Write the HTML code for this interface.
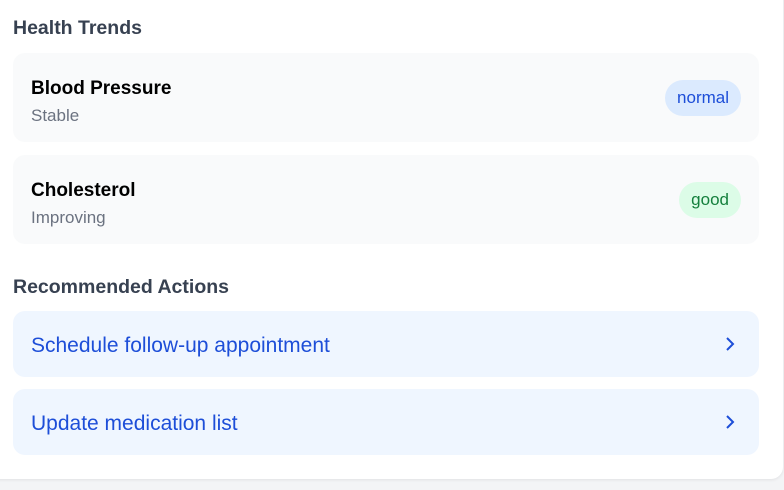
<!DOCTYPE html>
<html><head><meta charset="utf-8"><style>
*{box-sizing:border-box;margin:0;padding:0}
body{width:784px;height:490px;background:#f3f4f6;font-family:"Liberation Sans",sans-serif;position:relative;overflow:hidden}
.card{position:absolute;left:-20px;top:-20px;width:803px;height:499px;background:#fff;border-radius:12px;box-shadow:0 1px 3px rgba(0,0,0,0.08)}
.h{position:absolute;left:13px;font-size:19.5px;font-weight:bold;color:#374151}
.item{position:absolute;left:13px;width:746px;height:89px;background:#f9fafb;border-radius:12px}
.t{position:absolute;left:18px;top:25px;font-size:19px;font-weight:bold;color:#000}
.s{position:absolute;left:18px;top:53px;font-size:17px;color:#6b7280}
.b{position:absolute;right:18px;top:27px;height:36px;line-height:36px;border-radius:18px;font-size:17px;padding:0 12px}
.act{position:absolute;left:13px;width:746px;height:66px;background:#eff6ff;border-radius:12px;color:#1d4ed8;font-size:21px;line-height:70px;padding-left:18px}
.act svg{position:absolute;right:24px;top:25px}
</style></head><body>
<div class="card"></div>
<div class="h" style="top:17px">Health Trends</div>
<div class="item" style="top:53px"><div class="t">Blood Pressure</div><div class="s">Stable</div><div class="b" style="background:#dbeafe;color:#1d4ed8">normal</div></div>
<div class="item" style="top:155px"><div class="t">Cholesterol</div><div class="s">Improving</div><div class="b" style="background:#dcfce7;color:#15803d">good</div></div>
<div class="h" style="top:276px">Recommended Actions</div>
<div class="act" style="top:311px">Schedule follow-up appointment<svg width="10" height="16" viewBox="0 0 10 16"><path d="M2 2l6 6-6 6" fill="none" stroke="#1d4ed8" stroke-width="2"/></svg></div>
<div class="act" style="top:389px">Update medication list<svg width="10" height="16" viewBox="0 0 10 16"><path d="M2 2l6 6-6 6" fill="none" stroke="#1d4ed8" stroke-width="2"/></svg></div>
</body></html>
